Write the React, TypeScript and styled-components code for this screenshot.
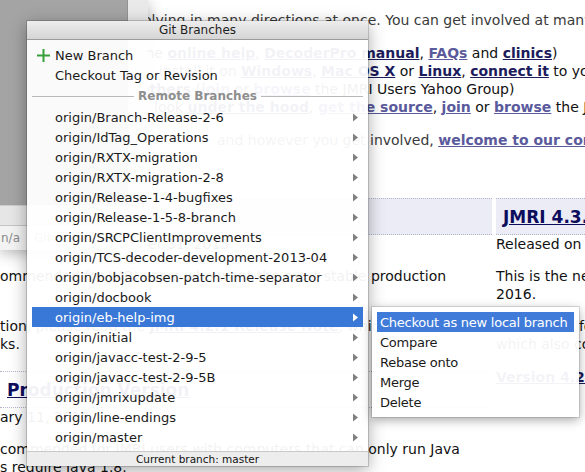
import React from "react";
import styled, { createGlobalStyle } from "styled-components";

const Global = createGlobalStyle`
  html, body { margin: 0; padding: 0; background: #fff; }
  body { width: 585px; height: 472px; overflow: hidden; }
  #root { width: 585px; height: 472px; }
`;

const Screen = styled.div`
  position: relative;
  width: 585px;
  height: 472px;
  overflow: hidden;
  background: #fff;
`;

/* ---------- web page (back window) ---------- */
const PageWindow = styled.div`
  position: absolute;
  inset: 0;
  padding-top: 11px;
  font-family: "DejaVu Sans", Verdana, sans-serif;
  font-size: 14px;
  line-height: 18px;
  color: #111;
`;

const TextLine = styled.div<{ $indent?: number; $grey?: boolean }>`
  white-space: nowrap;
  padding-left: ${(p) => p.$indent ?? 0}px;
  color: ${(p) => (p.$grey ? "#3a3a3a" : "#111")};
`;

const Link = styled.span<{ $visited?: boolean }>`
  font-weight: bold;
  text-decoration: underline;
  color: ${(p) => (p.$visited ? "#5a5a9c" : "#1c1c5c")};
`;

const Block = styled.div<{ $gap: number }>`
  margin-top: ${(p) => p.$gap}px;
`;

const Columns = styled.div`
  display: grid;
  grid-template-columns: 492px 1fr;
  column-gap: 4px;
  margin-top: 49px;
`;

const Column = styled.div`
  display: flex;
  flex-direction: column;
  min-width: 0;
`;

const HeadCell = styled.div<{ $tint?: boolean; $gap?: number }>`
  height: 35px;
  margin-top: ${(p) => p.$gap ?? 0}px;
  background: ${(p) => (p.$tint ? "#ececf6" : "transparent")};
  border-top: 1px dotted #b4b4cc;
  border-bottom: 1px dotted #b4b4cc;
  display: flex;
  align-items: center;
  padding-left: 7px;
  white-space: nowrap;
`;

const HeadLink = styled.span`
  font-size: 17px;
  font-weight: bold;
  text-decoration: underline;
  color: #0d0d5e;
`;

/* ---------- IDE window (top-left) ---------- */
const IdeWindow = styled.div`
  position: absolute;
  left: 0;
  top: 0;
  width: 148px;
  height: 250px;
  display: flex;
  flex-direction: column;
  box-shadow: 0 3px 14px rgba(0, 0, 0, 0.3);
`;

const IdeBody = styled.div`
  height: 205px;
  display: flex;
`;

const IdeEditor = styled.div`
  flex: 1;
  background: #a4a4a4;
`;

const IdeGutter = styled.div`
  width: 20px;
  background: #e9e9e9;
  border-left: 1px solid #939393;
`;

const IdeToolbar = styled.div`
  height: 19px;
  background: #e6e6e6;
  border-top: 1px solid #cdcdcd;
  border-bottom: 1px solid #c4c4c4;
`;

const IdeStatus = styled.div`
  height: 24px;
  background: #f3f3f3;
  display: flex;
  align-items: center;
  gap: 14px;
  padding-left: 1px;
  font-family: "DejaVu Sans", sans-serif;
  font-size: 12px;
  color: #8a8a8a;
`;

/* ---------- Git Branches popup ---------- */
const Popup = styled.div`
  position: absolute;
  left: 27px;
  top: 21px;
  width: 341px;
  height: 445px;
  display: flex;
  flex-direction: column;
  background: rgba(255, 255, 255, 0.945);
  box-shadow: 0 0 0 1px rgba(0, 0, 0, 0.16), 0 4px 16px rgba(0, 0, 0, 0.35);
  font-family: "DejaVu Sans", "Lucida Grande", sans-serif;
  font-size: 13px;
  color: #1a1a1a;
`;

const TitleBar = styled.div`
  height: 18px;
  border-bottom: 1px solid #9c9c9c;
  background: linear-gradient(#ededed, #d5d5d5);
  display: flex;
  align-items: center;
  justify-content: center;
  font-size: 12px;
  color: #1e1e1e;
`;

const MenuList = styled.div`
  padding: 5px 5px 0;
  flex: 1;
  display: flex;
  flex-direction: column;
`;

const MenuRow = styled.div<{ $selected?: boolean }>`
  height: 20px;
  flex-shrink: 0;
  display: flex;
  align-items: center;
  padding: 0 5px;
  white-space: nowrap;
  background: ${(p) => (p.$selected ? "#3a78d8" : "transparent")};
  color: ${(p) => (p.$selected ? "#fff" : "#1a1a1a")};
`;

const IconSlot = styled.span`
  width: 18px;
  height: 20px;
  display: flex;
  align-items: center;
  flex-shrink: 0;
`;

const RowLabel = styled.span`
  flex: 1;
`;

const Separator = styled.div`
  height: 22px;
  flex-shrink: 0;
  display: flex;
  align-items: center;
  gap: 4px;
`;

const SepLine = styled.div`
  flex: 1;
  height: 1px;
  background: #b8b8b8;
`;

const SepLabel = styled.span`
  font-size: 12px;
  font-weight: bold;
  color: #8e8e8e;
`;

const Footer = styled.div`
  height: 14px;
  border-top: 1px solid #c8c8c8;
  background: #ededed;
  display: flex;
  align-items: center;
  justify-content: center;
  font-size: 10.5px;
  color: #111;
`;

const ArrowSvg = styled.svg<{ $light?: boolean }>`
  flex-shrink: 0;
  fill: ${(p) => (p.$light ? "#ffffff" : "#808080")};
`;

const Submenu = styled.div`
  position: absolute;
  left: 372px;
  top: 307px;
  width: 207px;
  height: 110px;
  box-sizing: border-box;
  padding: 5px;
  display: flex;
  flex-direction: column;
  background: rgba(255, 255, 255, 0.95);
  box-shadow: 0 0 0 1px rgba(0, 0, 0, 0.12), 0 3px 10px rgba(0, 0, 0, 0.35);
  font-family: "DejaVu Sans", "Lucida Grande", sans-serif;
  font-size: 13px;
  letter-spacing: -0.25px;
`;

const SubItem = styled.div<{ $selected?: boolean }>`
  height: 20px;
  display: flex;
  align-items: center;
  padding-left: 3px;
  white-space: nowrap;
  background: ${(p) => (p.$selected ? "rgba(56, 118, 216, 0.96)" : "transparent")};
  color: ${(p) => (p.$selected ? "#fff" : "#1a1a1a")};
`;

const Arrow = ({ light }: { light?: boolean }) => (
  <ArrowSvg $light={light} width="5" height="9" viewBox="0 0 5 9">
    <path d="M0 0.5 L5 4.5 L0 8.5 Z" />
  </ArrowSvg>
);

const PlusIcon = () => (
  <svg width="13" height="13" viewBox="0 0 13 13">
    <rect x="5.5" y="0" width="2" height="13" fill="#38a038" />
    <rect x="0" y="5.5" width="13" height="2" fill="#38a038" />
  </svg>
);

const branches = [
  "origin/Branch-Release-2-6",
  "origin/IdTag_Operations",
  "origin/RXTX-migration",
  "origin/RXTX-migration-2-8",
  "origin/Release-1-4-bugfixes",
  "origin/Release-1-5-8-branch",
  "origin/SRCPClientImprovements",
  "origin/TCS-decoder-development-2013-04",
  "origin/bobjacobsen-patch-time-separator",
  "origin/docbook",
  "origin/eb-help-img",
  "origin/initial",
  "origin/javacc-test-2-9-5",
  "origin/javacc-test-2-9-5B",
  "origin/jmrixupdate",
  "origin/line-endings",
  "origin/master",
];

const subActions = [
  "Checkout as new local branch",
  "Compare",
  "Rebase onto",
  "Merge",
  "Delete",
];

export default function App() {
  return (
    <>
      <Global />
      <Screen>
        <PageWindow>
          <TextLine $indent={76} $grey>
            JMRI is evolving in many directions at once. You can get involved at many levels:
          </TextLine>
          <Block $gap={15}>
            <TextLine $indent={140}>
              the <Link>online help</Link>, <Link>DecoderPro manual</Link>,{" "}
              <Link $visited>FAQs</Link> and <Link>clinics</Link>)
            </TextLine>
            <TextLine $indent={159}>
              install it on <Link>Windows</Link>, <Link>Mac OS X</Link> or{" "}
              <Link>Linux</Link>, <Link>connect it</Link> to your computer
            </TextLine>
            <TextLine $indent={140}>
              <Link>others</Link> (<Link $visited>join</Link> or{" "}
              <Link $visited>browse</Link> the JMRI Users Yahoo Group)
            </TextLine>
            <TextLine $indent={154}>
              look <Link>under the hood</Link>, <Link $visited>get the source</Link>,{" "}
              <Link $visited>join</Link> or <Link $visited>browse</Link> the JMRI Developers group
            </TextLine>
          </Block>
          <Block $gap={15}>
            <TextLine $indent={217} $grey>
              and however you get involved, <Link $visited>welcome to our community!</Link>
            </TextLine>
          </Block>
          <Columns>
            <Column>
              <HeadCell $tint>
                <HeadLink>JMRI 4.2.1</HeadLink>
              </HeadCell>
              <TextLine>Released on December 31, 2015</TextLine>
              <Block $gap={14}>
                <TextLine>ommended for JMRI users who want the most stable production</TextLine>
              </Block>
              <Block $gap={32}>
                <TextLine>
                  tion, please read the <Link>JMRI 4.2.1 Release Note</Link>, which
                </TextLine>
                <TextLine>ks.</TextLine>
              </Block>
              <HeadCell $gap={18}>
                <HeadLink>Production Version</HeadLink>
              </HeadCell>
              <TextLine>ary 11, 2016</TextLine>
              <Block $gap={14}>
                <TextLine>commended for JMRI users with computers that can only run Java</TextLine>
                <TextLine>s require Java 1.8.</TextLine>
              </Block>
            </Column>
            <Column>
              <HeadCell $tint>
                <HeadLink>JMRI 4.3.2 Test Version</HeadLink>
              </HeadCell>
              <TextLine>Released on January 17, 2016</TextLine>
              <Block $gap={14}>
                <TextLine>This is the newest test release, from January</TextLine>
                <TextLine>2016.</TextLine>
              </Block>
              <Block $gap={14}>
                <TextLine>Read notes for more information,</TextLine>
                <TextLine>which also contains the changes</TextLine>
              </Block>
              <Block $gap={15}>
                <TextLine>
                  <Link>Version 4.2.1 Release Note</Link>
                </TextLine>
              </Block>
            </Column>
          </Columns>
        </PageWindow>

        <IdeWindow>
          <IdeBody>
            <IdeEditor />
            <IdeGutter />
          </IdeBody>
          <IdeToolbar />
          <IdeStatus>
            <span>n/a</span>
            <span>Git: master</span>
          </IdeStatus>
        </IdeWindow>

        <Popup>
          <TitleBar>Git Branches</TitleBar>
          <MenuList>
            <MenuRow>
              <IconSlot>
                <PlusIcon />
              </IconSlot>
              <RowLabel>New Branch</RowLabel>
            </MenuRow>
            <MenuRow>
              <IconSlot />
              <RowLabel>Checkout Tag or Revision</RowLabel>
            </MenuRow>
            <Separator>
              <SepLine />
              <SepLabel>Remote Branches</SepLabel>
              <SepLine />
            </Separator>
            {branches.map((b) => {
              const sel = b === "origin/eb-help-img";
              return (
                <MenuRow key={b} $selected={sel}>
                  <IconSlot />
                  <RowLabel>{b}</RowLabel>
                  <Arrow light={sel} />
                </MenuRow>
              );
            })}
          </MenuList>
          <Footer>Current branch: master</Footer>
        </Popup>

        <Submenu>
          {subActions.map((a, i) => (
            <SubItem key={a} $selected={i === 0}>
              {a}
            </SubItem>
          ))}
        </Submenu>
      </Screen>
    </>
  );
}
